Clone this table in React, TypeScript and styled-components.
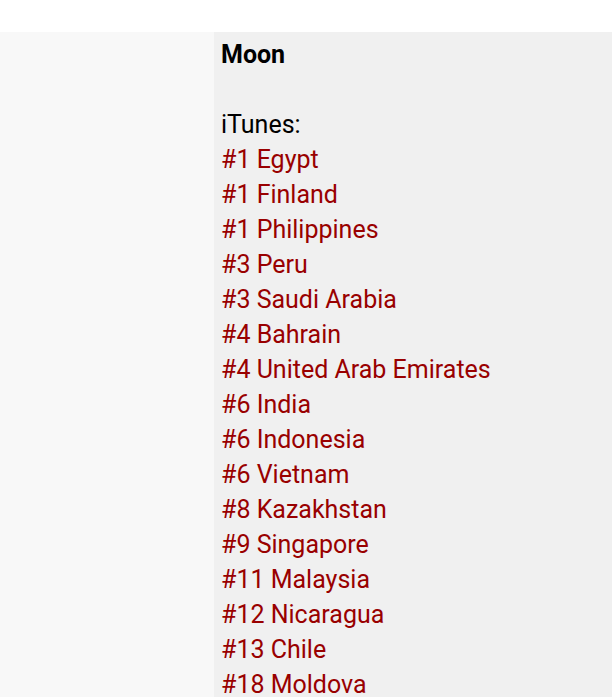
import React from "react";
import styled, { createGlobalStyle } from "styled-components";

const Global = createGlobalStyle`
  html, body { margin: 0; padding: 0; background: #ffffff; }
  body { font-family: Roboto, "Noto Sans", sans-serif; }
`;

const Page = styled.div`
  padding-top: 32px;
`;

const Row = styled.div`
  display: grid;
  grid-template-columns: 214px 1fr;
  min-height: 700px;
`;

const Side = styled.div`
  background: #f8f8f8;
`;

const Cell = styled.div`
  background: #f0f0f0;
  padding: 5px 7px 0;
  font-size: 25px;
  line-height: 35px;
  color: #000;
`;

const Title = styled.div`
  font-weight: 700;
`;

const Spacer = styled.div`
  height: 35px;
`;

const Label = styled.div``;

const Entry = styled.a`
  display: block;
  color: #990000;
  text-decoration: none;
`;

const charts = [
  "#1 Egypt",
  "#1 Finland",
  "#1 Philippines",
  "#3 Peru",
  "#3 Saudi Arabia",
  "#4 Bahrain",
  "#4 United Arab Emirates",
  "#6 India",
  "#6 Indonesia",
  "#6 Vietnam",
  "#8 Kazakhstan",
  "#9 Singapore",
  "#11 Malaysia",
  "#12 Nicaragua",
  "#13 Chile",
  "#18 Moldova",
];

export default function App() {
  return (
    <Page>
      <Global />
      <Row>
        <Side />
        <Cell>
          <Title>Moon</Title>
          <Spacer />
          <Label>iTunes:</Label>
          {charts.map((c) => (
            <Entry key={c} href="#">
              {c}
            </Entry>
          ))}
        </Cell>
      </Row>
    </Page>
  );
}
